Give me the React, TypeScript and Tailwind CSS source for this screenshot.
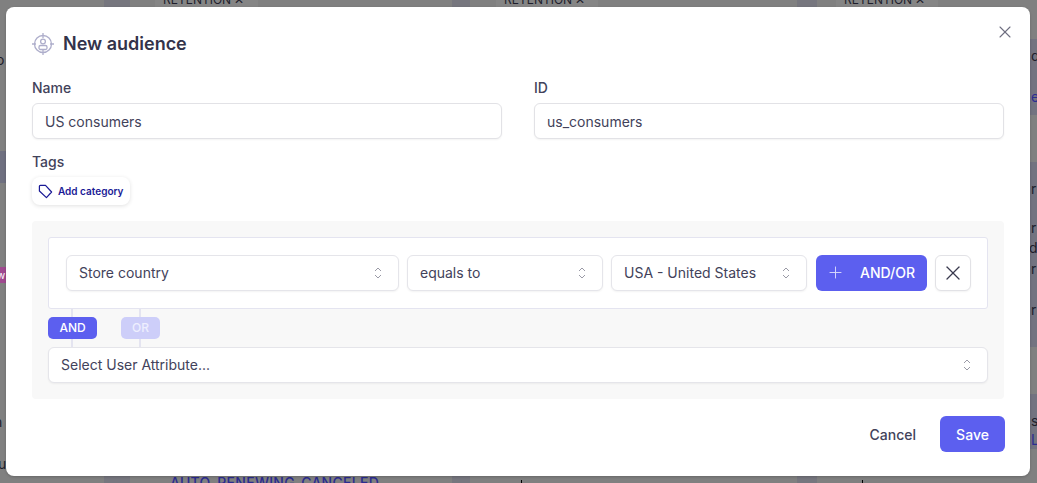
import React from "react";
import { X, Plus } from "lucide-react";

function Stepper() {
  return (
    <svg viewBox="0 0 10 14" width="10" height="14" fill="none" stroke="#9a9aa6" strokeWidth="1">
      <path d="M2 5 L5 2 L8 5" />
      <path d="M2 9 L5 12 L8 9" />
    </svg>
  );
}

function Select({ label, className }: { label: string; className: string }) {
  return (
    <div className={`h-[36px] flex items-center justify-between pl-[12px] pr-[15px] bg-white border border-[#e5e5ea] rounded-[6px] shadow-[0_1px_2px_rgba(0,0,0,0.05)] text-[14px] text-[#42425a] ${className}`}>
      <span className="-translate-y-px">{label}</span>
      <Stepper />
    </div>
  );
}

function Field({ label, value }: { label: string; value: string }) {
  return (
    <div className="flex-1 flex flex-col gap-[3px]">
      <div className="h-[24px] pb-[2px] flex items-center text-[14px] font-medium text-[#42425a]">{label}</div>
      <div className="h-[36px] flex items-center px-[12px] bg-white border border-[#e2e2e6] rounded-[6px] shadow-[0_1px_2px_rgba(0,0,0,0.05)] text-[14px] text-[#42425a]">
        {value}
      </div>
    </div>
  );
}

function BackColumn({ w, mark, label }: { w: string; mark?: string; label?: string }) {
  return (
    <div className={`flex flex-col justify-between h-full ${w}`}>
      <div className="h-[7px] bg-[#858585] overflow-hidden">
        <span className="block text-[12px] leading-[12px] -mt-[6px] pl-[8px] whitespace-nowrap text-[#1e1e2c]">RETENTION ✕</span>
      </div>
      {label && <div className="h-[7px] pl-[15px] text-[14px] leading-[14px] tracking-[0.02em] text-[#2c2c90] font-medium whitespace-nowrap">{label}</div>}
      {mark && <div className={`w-px h-[3px] bg-black ${mark}`} />}
    </div>
  );
}

function Backdrop() {
  return (
    <div className="absolute inset-0 flex text-[14px] leading-[16px] text-[#1e1e2c]">
      <div className="w-[6px] flex flex-col overflow-hidden">
        <div className="mt-[52px] -ml-[4px]">o</div>
        <div className="mt-[83px] h-[32px] bg-[#6f7080]" />
        <div className="mt-[84px] h-[16px] bg-[#a04a90] text-white text-[10px]"><span className="block -ml-[3px]">w</span></div>
        <div className="mt-[131px] -ml-[6px]">n</div>
        <div className="mt-[26px] -ml-[2px]">u</div>
      </div>
      <div className="flex-1 flex h-full pl-[98px]">
        <div className="w-[26px] h-full bg-[#76767e]" />
        <div className="ml-[25px]"><BackColumn w="w-[103px] h-full" label="AUTO_RENEWING_CANCELED" /></div>
        <div className="ml-[194px] w-[18px] h-full bg-[#76767e]" />
        <div className="ml-[26px]"><BackColumn w="w-[102px] h-full" mark="ml-[25px]" /></div>
        <div className="ml-[199px] w-[20px] h-full bg-[#76767e]" />
        <div className="ml-[19px]"><BackColumn w="w-[102px] h-full" mark="ml-[26px]" /></div>
      </div>
      <div className="w-[7px] flex flex-col pt-[39px] gap-[47px]">
        <div className="h-[76px] pt-[9px] pl-[1px] flex flex-col gap-[25px] bg-[#737380] overflow-hidden">
          <span>d</span>
          <span className="text-[#2c2c90]">e</span>
        </div>
        <div className="h-[185px] pt-[19px] pl-[1px] flex flex-col bg-[#737380] overflow-hidden">
          <span>r</span>
          <span className="mt-[23px]">r</span>
          <span className="mt-[4px] -ml-[2px]">d</span>
          <span className="mt-[5px]">r</span>
          <span className="mt-[25px]">r</span>
        </div>
        <div className="h-[55px] pt-[19px] pl-[1px] flex flex-col gap-[3px] bg-[#737380] overflow-hidden">
          <span>s</span>
          <span className="text-[#2c2c90]">L</span>
        </div>
      </div>
    </div>
  );
}

export default function App() {
  return (
    <div className="relative w-[1037px] h-[483px] overflow-hidden bg-[#808080]" style={{ fontFamily: "Inter, 'Liberation Sans', sans-serif" }}>
      <Backdrop />
      <div className="relative flex pl-[6px] pt-[7px]">
        <div className="relative w-[1024px] h-[469px] bg-white rounded-[8px] shadow-[0_1px_3px_rgba(0,0,0,0.2)] px-[26px] pt-[26px]">
          <button className="absolute right-[15px] top-[15px] text-[#6e6e80]">
            <X size={20} strokeWidth={1.3} />
          </button>

          <div className="flex items-center gap-[9px] h-[22px]">
            <svg viewBox="0 0 22 22" width="22" height="22" fill="none" stroke="#aeaecb" strokeWidth="1.3">
              <circle cx="11" cy="11" r="8.5" />
              <path d="M11 0 V5 M11 17 V22 M0 11 H4 M18 11 H22" />
              <circle cx="11" cy="8.5" r="2.4" />
              <rect x="7" y="12.5" width="8" height="4" rx="1.5" />
            </svg>
            <h2 className="text-[18px] leading-[24px] font-semibold text-[#33334a]">New audience</h2>
          </div>

          <div className="flex gap-[32px] mt-[21px]">
            <Field label="Name" value="US consumers" />
            <Field label="ID" value="us_consumers" />
          </div>

          <div className="mt-[10px] h-[24px] flex items-center text-[14px] font-medium text-[#42425a]">Tags</div>
          <div className="mt-[4px] w-[98px] h-[28px] flex items-center gap-[5px] pl-[6px] bg-white rounded-[8px] shadow-[0_1px_4px_rgba(0,0,0,0.12)]">
            <svg viewBox="0 0 16 16" width="15" height="15" fill="none" stroke="#1a1a96" strokeWidth="1.3" strokeLinejoin="round">
              <path d="M1.5 2.5 Q1.5 1.5 2.5 1.5 H8 L14.5 8.5 L9 14.5 L1.5 7.5 Z" />
            </svg>
            <span className="text-[10px] font-semibold text-[#1a1a96] whitespace-nowrap">Add category</span>
          </div>

          <div className="mt-[16px] w-[972px] h-[178px] bg-[#f8f8f8] rounded-[4px] p-[16px]">
            <div className="h-[72px] flex items-center gap-[8px] pl-[17px] pr-[16px] bg-white border border-[#e4e4f0] rounded-[3px]">
              <Select label="Store country" className="w-[333px]" />
              <Select label="equals to" className="w-[196px]" />
              <Select label="USA - United States" className="w-[196px]" />
              <button className="ml-[1px] -mt-[1px] w-[111px] h-[36px] flex items-center justify-between pl-[10px] pr-[12px] bg-[#5c5fef] rounded-[6px] text-[14px] font-medium text-white">
                <Plus size={19} strokeWidth={1.2} className="text-[#d8d9fb]" />
                <span>AND/OR</span>
              </button>
              <button className="-mt-[1px] w-[36px] h-[36px] flex items-center justify-center bg-white border border-[#e2e2e6] rounded-[6px] shadow-[0_1px_2px_rgba(0,0,0,0.05)] text-[#3a3a4e]">
                <X size={24} strokeWidth={1.3} />
              </button>
            </div>

            <div className="relative h-[38px]">
              <div className="absolute left-[23px] top-0 w-[2px] h-full bg-[#e4e4f0]" />
              <div className="absolute left-[91px] top-0 w-[2px] h-full bg-[#e4e4f0]" />
              <div className="relative flex gap-[24px] pt-[8px]">
                <span className="w-[49px] h-[22px] flex items-center justify-center rounded-[5px] bg-[#5c5fef] text-[12px] font-medium text-white">AND</span>
                <span className="w-[39px] h-[22px] flex items-center justify-center rounded-[5px] bg-[#cdcef9] text-[12px] font-medium text-[#eeeefe]">OR</span>
              </div>
            </div>

            <Select label="Select User Attribute..." className="w-full" />
          </div>

          <div className="flex items-center justify-end mt-[17px] -mr-[1px] gap-[24px]">
            <button className="text-[14px] font-medium text-[#42425a]">Cancel</button>
            <button className="w-[65px] h-[36px] bg-[#5c5fef] rounded-[6px] text-[14px] font-medium text-white">Save</button>
          </div>
        </div>
      </div>
    </div>
  );
}
